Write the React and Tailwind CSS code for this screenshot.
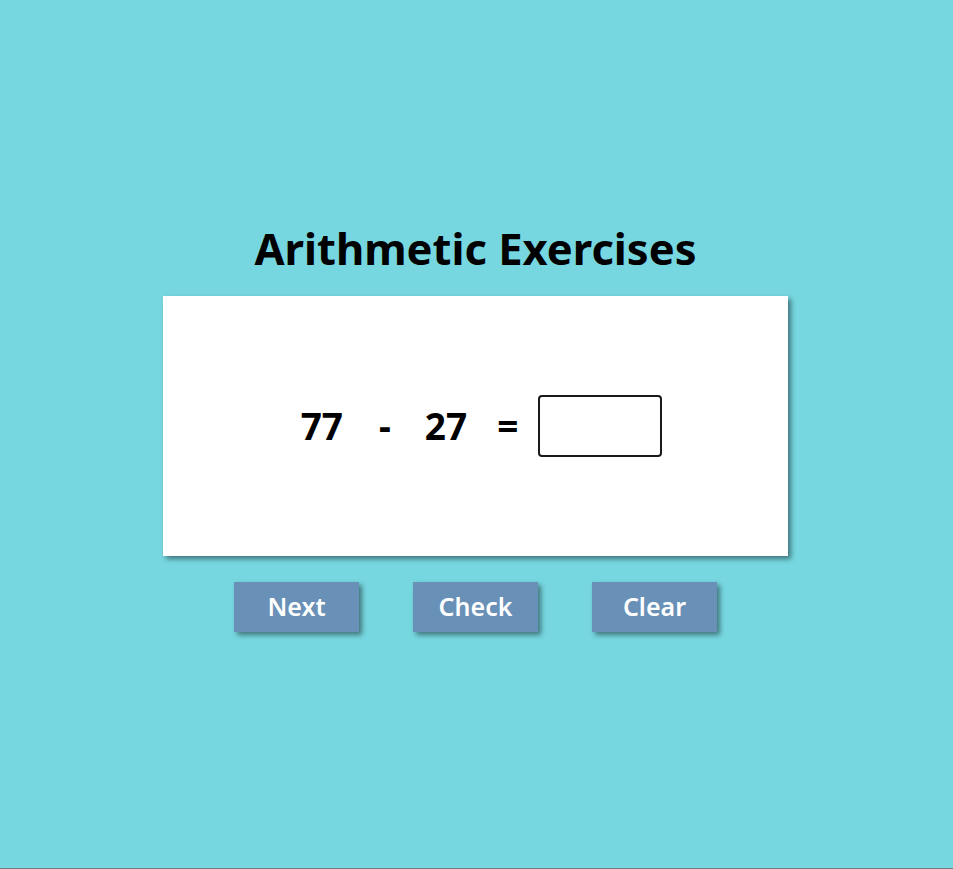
import { useState } from 'react';

const font = { fontFamily: '"Noto Sans", "Open Sans", sans-serif' };

export default function App() {
  const [answer, setAnswer] = useState('');
  const a = 77;
  const b = 27;

  return (
    <div className="h-[869px] bg-[#76d7e0] border-b border-[#7a7a7a] flex flex-col items-center pt-[221px]" style={font}>
      <h1 className="text-[43.5px] leading-[54px] font-bold text-black mr-[2px]">Arithmetic Exercises</h1>

      <div className="mt-[21px] mr-[2px] w-[625px] h-[260px] bg-white shadow-[3px_3px_5px_rgba(0,0,0,0.45)] flex items-center justify-center pl-[12px]">
        <span className="text-[37px] font-bold text-black">{a}</span>
        <span className="text-[37px] font-bold text-black ml-[36px] mr-[34px]">-</span>
        <span className="text-[37px] font-bold text-black">{b}</span>
        <span className="text-[37px] font-bold text-black ml-[30px] mr-[20px]">=</span>
        <input
          value={answer}
          onChange={e => setAnswer(e.target.value)}
          className="w-[124px] h-[62px] border-2 border-[#1a1a1a] rounded-[4px] bg-white text-[32px] text-center outline-none"
        />
      </div>

      <div className="mt-[26px] mr-[2px] flex gap-[54px]">
        {['Next', 'Check', 'Clear'].map(label => (
          <button
            key={label}
            className="w-[125px] h-[50px] bg-[#6990b6] text-white text-[25px] font-semibold shadow-[3px_3px_5px_rgba(0,0,0,0.45)]"
          >
            {label}
          </button>
        ))}
      </div>
    </div>
  );
}
